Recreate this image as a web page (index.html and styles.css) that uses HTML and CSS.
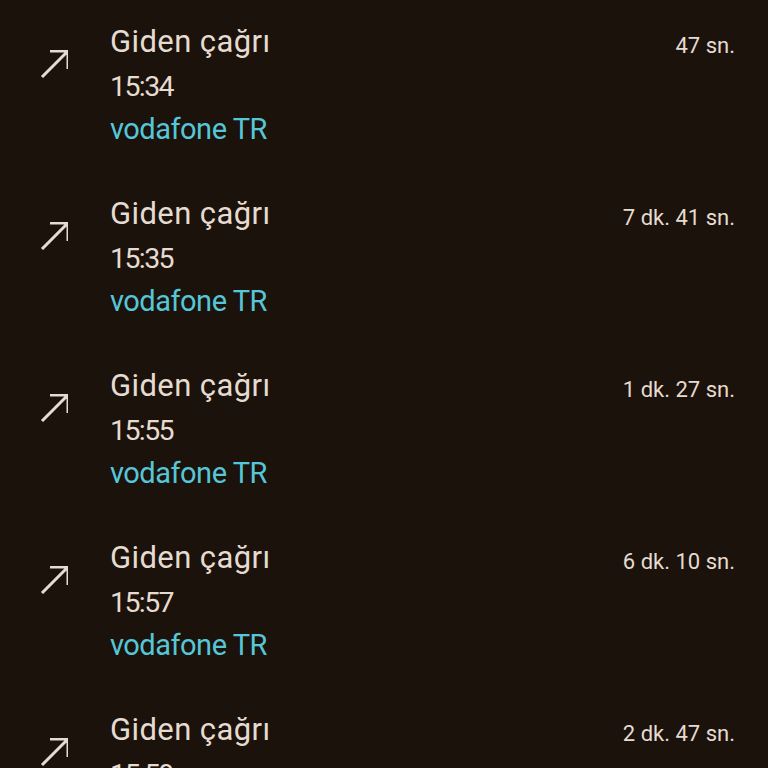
FILE: index.html
```html
<!DOCTYPE html>
<html lang="tr">
<head>
<meta charset="utf-8">
<link rel="stylesheet" href="styles.css">
</head>
<body>
<ul class="calls">
  <li class="call">
    <div class="icon"><svg viewBox="0 0 28 28" width="28" height="28"><path d="M2 27 L28 1 M10 1 H28 V19" fill="none" stroke="#e6dbd0" stroke-width="3"/></svg></div>
    <div class="info"><div class="title">Giden çağrı</div><div class="time">15:34</div><div class="sim">vodafone TR</div></div>
    <div class="dur">47 sn.</div>
  </li>
  <li class="call">
    <div class="icon"><svg viewBox="0 0 28 28" width="28" height="28"><path d="M2 27 L28 1 M10 1 H28 V19" fill="none" stroke="#e6dbd0" stroke-width="3"/></svg></div>
    <div class="info"><div class="title">Giden çağrı</div><div class="time">15:35</div><div class="sim">vodafone TR</div></div>
    <div class="dur">7 dk. 41 sn.</div>
  </li>
  <li class="call">
    <div class="icon"><svg viewBox="0 0 28 28" width="28" height="28"><path d="M2 27 L28 1 M10 1 H28 V19" fill="none" stroke="#e6dbd0" stroke-width="3"/></svg></div>
    <div class="info"><div class="title">Giden çağrı</div><div class="time">15:55</div><div class="sim">vodafone TR</div></div>
    <div class="dur">1 dk. 27 sn.</div>
  </li>
  <li class="call">
    <div class="icon"><svg viewBox="0 0 28 28" width="28" height="28"><path d="M2 27 L28 1 M10 1 H28 V19" fill="none" stroke="#e6dbd0" stroke-width="3"/></svg></div>
    <div class="info"><div class="title">Giden çağrı</div><div class="time">15:57</div><div class="sim">vodafone TR</div></div>
    <div class="dur">6 dk. 10 sn.</div>
  </li>
  <li class="call">
    <div class="icon"><svg viewBox="0 0 28 28" width="28" height="28"><path d="M2 27 L28 1 M10 1 H28 V19" fill="none" stroke="#e6dbd0" stroke-width="3"/></svg></div>
    <div class="info"><div class="title">Giden çağrı</div><div class="time">15:59</div><div class="sim">vodafone TR</div></div>
    <div class="dur">2 dk. 47 sn.</div>
  </li>
</ul>
</body>
</html>
```
FILE: styles.css
```css
html, body {
  margin: 0;
  padding: 0;
  background: #1a120b;
  height: 100%;
  overflow: hidden;
}
body {
  font-family: Roboto, "Noto Sans", sans-serif;
  color: #e6dbd0;
}
.calls {
  list-style: none;
  margin: 0;
  padding: 21px 33px 0 0;
}
.call {
  display: flex;
  height: 172px;
  flex-shrink: 0;
}
.icon {
  width: 110px;
  padding: 29px 0 0 40px;
  box-sizing: border-box;
}
.icon svg { display: block; }
.info {
  flex: 1;
  line-height: 42px;
}
.title {
  font-size: 31px;
  letter-spacing: 0.4px;
}
.time {
  font-size: 28.5px;
  letter-spacing: -1.6px;
  margin-top: 3px;
}
.sim {
  font-size: 29px;
  letter-spacing: -0.5px;
  color: #56c6d8;
}
.dur {
  font-size: 22px;
  line-height: 46px;
  padding-top: 2px;
}
```
